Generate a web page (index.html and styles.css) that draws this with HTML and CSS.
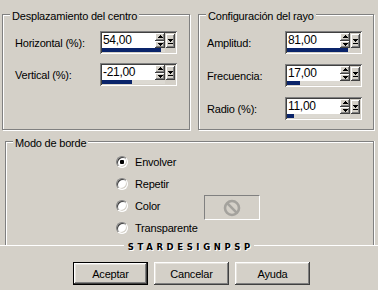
FILE: index.html
```html
<!DOCTYPE html>
<html lang="es">
<head>
<meta charset="utf-8">
<title>Ondas</title>
<link rel="stylesheet" href="styles.css">
</head>
<body>
<div class="dialog">
  <div class="top">
    <section class="group g-left">
      <div class="title">Desplazamiento del centro</div>
      <div class="rows rows-left">
        <div class="row">
          <span class="lbl">Horizontal (%):</span>
          <div class="spin">
            <div class="edit">54,00</div>
            <div class="arrows">
              <span class="sbtn"><svg width="5" height="3" viewBox="0 0 5 3" shape-rendering="crispEdges"><rect x="2" y="0" width="1" height="1"/><rect x="1" y="1" width="3" height="1"/><rect x="0" y="2" width="5" height="1"/></svg></span>
              <span class="sbtn"><svg width="5" height="3" viewBox="0 0 5 3" shape-rendering="crispEdges"><rect x="0" y="0" width="5" height="1"/><rect x="1" y="1" width="3" height="1"/><rect x="2" y="2" width="1" height="1"/></svg></span>
            </div>
            <span class="drop"><svg width="5" height="5" viewBox="0 0 5 5" shape-rendering="crispEdges"><rect x="0" y="0" width="5" height="1"/><rect x="1" y="1" width="3" height="1"/><rect x="2" y="2" width="1" height="1"/><rect x="0" y="4" width="5" height="1"/></svg></span>
            <div class="bar"><div class="fill" style="width:94%"></div></div>
          </div>
        </div>
        <div class="row">
          <span class="lbl">Vertical (%):</span>
          <div class="spin">
            <div class="edit">-21,00</div>
            <div class="arrows">
              <span class="sbtn"><svg width="5" height="3" viewBox="0 0 5 3" shape-rendering="crispEdges"><rect x="2" y="0" width="1" height="1"/><rect x="1" y="1" width="3" height="1"/><rect x="0" y="2" width="5" height="1"/></svg></span>
              <span class="sbtn"><svg width="5" height="3" viewBox="0 0 5 3" shape-rendering="crispEdges"><rect x="0" y="0" width="5" height="1"/><rect x="1" y="1" width="3" height="1"/><rect x="2" y="2" width="1" height="1"/></svg></span>
            </div>
            <span class="drop"><svg width="5" height="5" viewBox="0 0 5 5" shape-rendering="crispEdges"><rect x="0" y="0" width="5" height="1"/><rect x="1" y="1" width="3" height="1"/><rect x="2" y="2" width="1" height="1"/><rect x="0" y="4" width="5" height="1"/></svg></span>
            <div class="bar"><div class="fill" style="width:48%"></div></div>
          </div>
        </div>
      </div>
    </section>
    <section class="group g-right">
      <div class="title">Configuración del rayo</div>
      <div class="rows rows-right">
        <div class="row">
          <span class="lbl">Amplitud:</span>
          <div class="spin">
            <div class="edit">81,00</div>
            <div class="arrows">
              <span class="sbtn"><svg width="5" height="3" viewBox="0 0 5 3" shape-rendering="crispEdges"><rect x="2" y="0" width="1" height="1"/><rect x="1" y="1" width="3" height="1"/><rect x="0" y="2" width="5" height="1"/></svg></span>
              <span class="sbtn"><svg width="5" height="3" viewBox="0 0 5 3" shape-rendering="crispEdges"><rect x="0" y="0" width="5" height="1"/><rect x="1" y="1" width="3" height="1"/><rect x="2" y="2" width="1" height="1"/></svg></span>
            </div>
            <span class="drop"><svg width="5" height="5" viewBox="0 0 5 5" shape-rendering="crispEdges"><rect x="0" y="0" width="5" height="1"/><rect x="1" y="1" width="3" height="1"/><rect x="2" y="2" width="1" height="1"/><rect x="0" y="4" width="5" height="1"/></svg></span>
            <div class="bar"><div class="fill" style="width:97%"></div></div>
          </div>
        </div>
        <div class="row">
          <span class="lbl">Frecuencia:</span>
          <div class="spin">
            <div class="edit">17,00</div>
            <div class="arrows">
              <span class="sbtn"><svg width="5" height="3" viewBox="0 0 5 3" shape-rendering="crispEdges"><rect x="2" y="0" width="1" height="1"/><rect x="1" y="1" width="3" height="1"/><rect x="0" y="2" width="5" height="1"/></svg></span>
              <span class="sbtn"><svg width="5" height="3" viewBox="0 0 5 3" shape-rendering="crispEdges"><rect x="0" y="0" width="5" height="1"/><rect x="1" y="1" width="3" height="1"/><rect x="2" y="2" width="1" height="1"/></svg></span>
            </div>
            <span class="drop"><svg width="5" height="5" viewBox="0 0 5 5" shape-rendering="crispEdges"><rect x="0" y="0" width="5" height="1"/><rect x="1" y="1" width="3" height="1"/><rect x="2" y="2" width="1" height="1"/><rect x="0" y="4" width="5" height="1"/></svg></span>
            <div class="bar"><div class="fill" style="width:20%"></div></div>
          </div>
        </div>
        <div class="row">
          <span class="lbl">Radio (%):</span>
          <div class="spin">
            <div class="edit">11,00</div>
            <div class="arrows">
              <span class="sbtn"><svg width="5" height="3" viewBox="0 0 5 3" shape-rendering="crispEdges"><rect x="2" y="0" width="1" height="1"/><rect x="1" y="1" width="3" height="1"/><rect x="0" y="2" width="5" height="1"/></svg></span>
              <span class="sbtn"><svg width="5" height="3" viewBox="0 0 5 3" shape-rendering="crispEdges"><rect x="0" y="0" width="5" height="1"/><rect x="1" y="1" width="3" height="1"/><rect x="2" y="2" width="1" height="1"/></svg></span>
            </div>
            <span class="drop"><svg width="5" height="5" viewBox="0 0 5 5" shape-rendering="crispEdges"><rect x="0" y="0" width="5" height="1"/><rect x="1" y="1" width="3" height="1"/><rect x="2" y="2" width="1" height="1"/><rect x="0" y="4" width="5" height="1"/></svg></span>
            <div class="bar"><div class="fill" style="width:11%"></div></div>
          </div>
        </div>
      </div>
    </section>
  </div>

  <section class="group g-mode">
    <div class="title">Modo de borde</div>
    <div class="radios">
      <div class="ritem"><span class="radio checked"></span><span class="rlbl">Envolver</span></div>
      <div class="ritem"><span class="radio"></span><span class="rlbl">Repetir</span></div>
      <div class="ritem"><span class="radio"></span><span class="rlbl">Color</span>
        <span class="swatch"><svg width="18" height="18" viewBox="0 0 18 18"><circle cx="9" cy="9" r="7" fill="none" stroke="#a4a29d" stroke-width="2.6"/><line x1="4.2" y1="4.2" x2="13.8" y2="13.8" stroke="#a4a29d" stroke-width="2.6"/></svg></span>
      </div>
      <div class="ritem"><span class="radio"></span><span class="rlbl">Transparente</span></div>
    </div>
  </section>

  <div class="mark">
    <span class="mline"></span>
    <span class="mtext">STARDESIGNPSP</span>
    <span class="mline"></span>
  </div>

  <div class="buttons">
    <button class="btn default">Aceptar</button>
    <button class="btn">Cancelar</button>
    <button class="btn">Ayuda</button>
  </div>
</div>
</body>
</html>
```

FILE: styles.css
```css
html, body {
  margin: 0;
  padding: 0;
  background: #d4d0c8;
}

body {
  font-family: "Liberation Sans", Arial, sans-serif;
  font-size: 11px;
  letter-spacing: -0.2px;
  color: #000;
}

.dialog {
  width: 378px;
  height: 290px;
  display: flex;
  flex-direction: column;
  overflow: hidden;
}

/* ---------- group boxes ---------- */
.group {
  box-sizing: border-box;
  border: 1px solid #808080;
  box-shadow: 1px 1px 0 #fff, inset 1px 1px 0 #fff;
  display: flex;
  flex-direction: column;
}

.title {
  align-self: flex-start;
  margin: -5px 0 0 7px;
  padding: 0 2px;
  line-height: 13px;
  background: #d4d0c8;
  white-space: nowrap;
}

.top {
  display: flex;
  gap: 8px;
  padding: 14px 0 0 2px;
}

.top .group {
  height: 116px;
}

.g-left {
  width: 188px;
}

.g-right {
  width: 176px;
}

.rows {
  display: flex;
  flex-direction: column;
  margin-top: 8px;
  padding-right: 11px;
}

.rows-left {
  gap: 9px;
  padding-left: 12px;
  padding-right: 12px;
}

.rows-right {
  gap: 10px;
  padding-left: 8px;
}

.row {
  display: flex;
  align-items: center;
  justify-content: space-between;
  height: 23px;
}

.lbl {
  white-space: nowrap;
}

/* ---------- spin field ---------- */
.spin {
  box-sizing: border-box;
  width: 77px;
  height: 23px;
  padding: 2px;
  box-shadow: inset 1px 1px 0 #808080, inset -1px -1px 0 #fff,
              inset 2px 2px 0 #404040, inset -2px -2px 0 #d4d0c8;
  display: grid;
  grid-template-columns: 1fr 10px 10px;
  grid-template-rows: 15px 4px;
}

.edit {
  grid-column: 1;
  grid-row: 1;
  background: #fff;
  font-size: 12px;
  letter-spacing: -0.3px;
  line-height: 15px;
  padding-left: 1px;
}

.arrows {
  grid-column: 2;
  grid-row: 1;
  display: flex;
  flex-direction: column;
  background: #fff;
}

.sbtn {
  flex: 1;
  display: flex;
  align-items: center;
  justify-content: center;
  background: #d4d0c8;
  box-shadow: inset -1px -1px 0 #404040, inset 1px 1px 0 #fff, inset -2px -2px 0 #808080;
}

.sbtn svg,
.drop svg {
  display: block;
  fill: #000;
}

.drop {
  grid-column: 3;
  grid-row: 1;
  margin: 1px 0 0 1px;
  display: flex;
  align-items: center;
  justify-content: center;
  background: #d4d0c8;
  box-shadow: inset -1px -1px 0 #404040, inset 1px 1px 0 #fff, inset -2px -2px 0 #808080;
}

.bar {
  grid-column: 1 / 3;
  grid-row: 2;
  background: #dcd9d2;
}

.fill {
  height: 100%;
  background: #0a246a;
}

/* ---------- border mode ---------- */
.g-mode {
  width: 369px;
  height: 105px;
  margin: 11px 0 0 5px;
  border-bottom: 0;
  box-shadow: 1px 0 0 #fff, inset 1px 1px 0 #fff;
}

.radios {
  display: flex;
  flex-direction: column;
  margin-top: 1px;
  padding-left: 110px;
}

.ritem {
  display: flex;
  align-items: center;
  height: 22px;
}

.radio {
  box-sizing: border-box;
  width: 12px;
  height: 12px;
  margin-right: 7px;
  border-radius: 50%;
  background: #fff;
  border: 1px solid;
  border-color: #808080 #fff #fff #808080;
  box-shadow: inset 1px 1px 0 #404040, inset -1px -1px 0 #d4d0c8;
  display: flex;
  align-items: center;
  justify-content: center;
}

.radio.checked::after {
  content: "";
  width: 4px;
  height: 4px;
  border-radius: 1px;
  background: #000;
}

.rlbl {
  width: 69px;
  white-space: nowrap;
}

.swatch {
  box-sizing: border-box;
  width: 56px;
  height: 25px;
  margin-bottom: -3px;
  border: 1px solid;
  border-color: #808080 #fff #fff #808080;
  display: flex;
  align-items: center;
  justify-content: center;
}

/* ---------- watermark ---------- */
.mark {
  display: flex;
  align-items: center;
  height: 12px;
  margin-top: -5px;
}

.mline {
  flex: 1;
  height: 1px;
  background: #fff;
  align-self: flex-start;
  margin-top: 4px;
}

.mtext {
  font-family: "DejaVu Sans", sans-serif;
  font-weight: bold;
  font-size: 8.5px;
  letter-spacing: 3.6px;
  margin-right: -3.6px;
  padding: 0 4px;
  line-height: 12px;
  color: #000;
  text-shadow: 1px 1px 0 #fff;
}

/* ---------- buttons ---------- */
.buttons {
  display: flex;
  gap: 6px;
  padding-left: 73px;
  margin-top: 9px;
}

.btn {
  box-sizing: border-box;
  width: 75px;
  height: 23px;
  padding: 0;
  border: 0;
  background: #d4d0c8;
  font-family: "Liberation Sans", Arial, sans-serif;
  font-size: 11px;
  letter-spacing: -0.2px;
  color: #000;
  box-shadow: inset -1px -1px 0 #404040, inset 1px 1px 0 #fff,
              inset -2px -2px 0 #808080, inset 2px 2px 0 #e6e3dd;
}

.btn.default {
  border: 1px solid #000;
}
```
